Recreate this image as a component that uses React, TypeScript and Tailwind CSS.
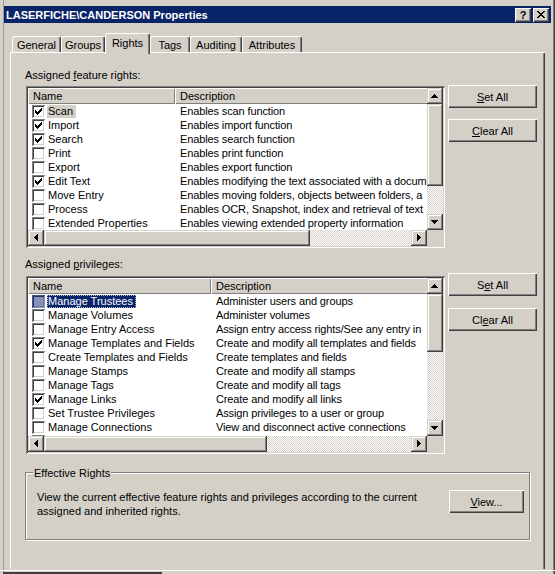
import React from "react";

const raised =
  "shadow-[inset_-1px_-1px_#404040,inset_1px_1px_#d4d0c8,inset_-2px_-2px_#808080,inset_2px_2px_#ffffff]";
const btn3d =
  "shadow-[inset_1px_1px_#ffffff,inset_-1px_-1px_#404040,inset_-2px_-2px_#808080]";
const sunken =
  "shadow-[inset_1px_1px_#808080,inset_-1px_-1px_#ffffff,inset_2px_2px_#404040,inset_-2px_-2px_#d4d0c8]";
const checker =
  "bg-[image:repeating-conic-gradient(#d4d0c8_0_25%,#ffffff_0_50%)] bg-[length:2px_2px]";

const arrows: Record<string, string> = {
  up: "M7 6h1v1h-1z M6 7h3v1h-3z M5 8h5v1h-5z M4 9h7v1h-7z",
  down: "M4 6h7v1h-7z M5 7h5v1h-5z M6 8h3v1h-3z M7 9h1v1h-1z",
  left: "M6 7h1v1h-1z M7 6h1v3h-1z M8 5h1v5h-1z M9 4h1v7h-1z",
  right: "M6 4h1v7h-1z M7 5h1v5h-1z M8 6h1v3h-1z M9 7h1v1h-1z",
};

function ScrollBtn({ dir }: { dir: "up" | "down" | "left" | "right" }) {
  return (
    <div className={`w-[16px] h-[16px] shrink-0 bg-[#d4d0c8] ${raised}`}>
      <svg width="16" height="16" viewBox="0 0 16 16" shapeRendering="crispEdges">
        <path d={arrows[dir]} fill="#000" />
      </svg>
    </div>
  );
}

const checkPath =
  "M9 3h1v1h-1z M8 4h2v1h-2z M3 5h1v1h-1z M7 5h3v1h-3z M3 6h2v1h-2z M6 6h3v1h-3z M3 7h5v1h-5z M4 8h3v1h-3z M5 9h1v1h-1z";

function Check({ checked, sel }: { checked: boolean; sel?: boolean }) {
  return (
    <span
      className={
        sel
          ? "block w-[13px] h-[13px] shrink-0 bg-[#8592b5] shadow-[inset_1px_1px_#45557f,inset_-1px_-1px_#8592b5,inset_2px_2px_#253468,inset_-2px_-2px_#6f7a99]"
          : `block w-[13px] h-[13px] shrink-0 bg-white ${sunken}`
      }
    >
      {checked && (
        <svg width="13" height="13" viewBox="0 0 13 13" shapeRendering="crispEdges">
          <path d={checkPath} fill="#000" />
        </svg>
      )}
    </span>
  );
}

type Item = { name: string; desc: string; checked: boolean; hl?: "gray" | "navy" };

const rights: Item[] = [
  { name: "Scan", desc: "Enables scan function", checked: true, hl: "gray" },
  { name: "Import", desc: "Enables import function", checked: true },
  { name: "Search", desc: "Enables search function", checked: true },
  { name: "Print", desc: "Enables print function", checked: false },
  { name: "Export", desc: "Enables export function", checked: false },
  { name: "Edit Text", desc: "Enables modifying the text associated with a docum", checked: true },
  { name: "Move Entry", desc: "Enables moving folders, objects between folders, a", checked: false },
  { name: "Process", desc: "Enables OCR, Snapshot, index and retrieval of text", checked: false },
  { name: "Extended Properties", desc: "Enables viewing extended property information", checked: false },
];

const privileges: Item[] = [
  { name: "Manage Trustees", desc: "Administer users and groups", checked: false, hl: "navy" },
  { name: "Manage Volumes", desc: "Administer volumes", checked: false },
  { name: "Manage Entry Access", desc: "Assign entry access rights/See any entry in", checked: false },
  { name: "Manage Templates and Fields", desc: "Create and modify all templates and fields", checked: true },
  { name: "Create Templates and Fields", desc: "Create templates and fields", checked: false },
  { name: "Manage Stamps", desc: "Create and modify all stamps", checked: false },
  { name: "Manage Tags", desc: "Create and modify all tags", checked: false },
  { name: "Manage Links", desc: "Create and modify all links", checked: true },
  { name: "Set Trustee Privileges", desc: "Assign privileges to a user or group", checked: false },
  { name: "Manage Connections", desc: "View and disconnect active connections", checked: false },
  { name: "", desc: "", checked: false },
];

function Row({ item, nameW }: { item: Item; nameW: string }) {
  const hlCls =
    item.hl === "gray"
      ? "bg-[#d4d0c8]"
      : item.hl === "navy"
      ? "bg-[#0a246a] text-white outline-1 outline-dotted outline-offset-[-1px] outline-[#b8bccc]"
      : "";
  return (
    <div className="h-[14px] flex items-center whitespace-nowrap shrink-0">
      <div className={`${nameW} shrink-0 h-full flex items-center pl-[4px]`}>
        <Check checked={item.checked} sel={item.hl === "navy"} />
        {item.name && (
          <span className={`ml-[2px] px-[1px] pr-[3px] h-[13px] leading-[13px] ${hlCls}`}>{item.name}</span>
        )}
      </div>
      {item.desc && <div className="pl-[5px] tracking-[-0.12px]">{item.desc}</div>}
    </div>
  );
}

function ListView({
  items,
  nameW,
  rowsH,
  outerH,
  vThumb,
  hThumb,
}: {
  items: Item[];
  nameW: string;
  rowsH: string;
  outerH: string;
  vThumb: string;
  hThumb: string;
}) {
  return (
    <div className={`ml-[1px] w-[419px] ${outerH} p-[2px] bg-white flex flex-col ${sunken}`}>
      <div className="flex flex-1 min-h-0">
        <div className="w-[399px] flex flex-col overflow-hidden">
          <div className="h-[16px] flex shrink-0">
            <div className={`${nameW} shrink-0 bg-[#d4d0c8] pl-[5px] leading-[16px] shadow-[inset_1px_1px_#ffffff,inset_-1px_-1px_#808080]`}>
              Name
            </div>
            <div className="flex-1 bg-[#d4d0c8] pl-[5px] leading-[16px] shadow-[inset_1px_1px_#ffffff,inset_0_-1px_#808080]">
              Description
            </div>
          </div>
          <div className={`${rowsH} flex flex-col overflow-hidden bg-white`}>
            {items.map((it, i) => (
              <Row key={i} item={it} nameW={nameW} />
            ))}
          </div>
        </div>
        <div className="w-[16px] flex flex-col">
          <ScrollBtn dir="up" />
          <div className={`${vThumb} shrink-0 bg-[#d4d0c8] ${raised}`} />
          <div className={`flex-1 ${checker}`} />
          <ScrollBtn dir="down" />
        </div>
      </div>
      <div className="h-[16px] flex shrink-0">
        <ScrollBtn dir="left" />
        <div className={`${hThumb} shrink-0 bg-[#d4d0c8] ${raised}`} />
        <div className={`flex-1 ${checker}`} />
        <ScrollBtn dir="right" />
        <div className="w-[16px] bg-[#d4d0c8]" />
      </div>
    </div>
  );
}

function PushButton({ children, w = "w-[89px]" }: { children: React.ReactNode; w?: string }) {
  return (
    <div className={`${w} h-[23px] bg-[#d4d0c8] flex items-center justify-center ${btn3d}`}>
      {children}
    </div>
  );
}

function Tab({ label, w, sel }: { label: string; w: string; sel?: boolean }) {
  if (sel) {
    return (
      <div
        className={`${w} h-[21px] -mb-[2px] relative z-10 bg-[#d4d0c8] flex items-center justify-center pb-[3px] border-t border-l border-t-white border-l-white border-r border-r-[#404040] rounded-t-[3px] shadow-[inset_-1px_0_#808080]`}
      >
        {label}
      </div>
    );
  }
  return (
    <div
      className={`${w} h-[16px] flex items-center justify-center border-t border-l border-t-white border-l-white border-r border-r-[#404040] rounded-t-[3px] shadow-[inset_-1px_0_#808080]`}
    >
      {label}
    </div>
  );
}

export default function App() {
  return (
    <div className="w-[555px] h-[574px] bg-[#d4d0c8] overflow-hidden flex flex-col font-['Liberation_Sans',Arial,sans-serif] text-[11px] leading-[14px] text-black shadow-[inset_-1px_0_#404040,inset_-2px_0_#808080,inset_3px_0_#d4d0c8,inset_4px_0_#9c9a94]">
      <div className="h-[6px] shrink-0" />
      {/* Title bar */}
      <div className="ml-[4px] w-[547px] h-[17px] shrink-0 bg-[#0a246a] flex items-center justify-between pl-[2px] pr-[2px]">
        <span className="text-white font-bold text-[11px]">{"LASERFICHE\\CANDERSON Properties"}</span>
        <div className="flex gap-[2px]">
          <div className={`w-[16px] h-[14px] bg-[#d4d0c8] flex items-center justify-center font-bold text-[11px] leading-[14px] ${btn3d}`}>
            ?
          </div>
          <div className={`w-[16px] h-[14px] bg-[#d4d0c8] ${btn3d}`}>
            <svg width="16" height="14" viewBox="0 0 16 14" shapeRendering="crispEdges">
              <path
                d="M4 3h2v1h-2z M10 3h2v1h-2z M5 4h2v1h-2z M9 4h2v1h-2z M6 5h4v1h-4z M7 6h2v1h-2z M6 7h4v1h-4z M5 8h2v1h-2z M9 8h2v1h-2z M4 9h2v1h-2z M10 9h2v1h-2z"
                fill="#000"
              />
            </svg>
          </div>
        </div>
      </div>
      {/* Tabs */}
      <div className="mt-[10px] ml-[12px] h-[19px] shrink-0 flex items-end">
        <Tab label="General" w="w-[49px]" />
        <Tab label="Groups" w="w-[44px]" />
        <Tab label="Rights" w="w-[45px]" sel />
        <Tab label="Tags" w="w-[40px]" />
        <Tab label="Auditing" w="w-[52px]" />
        <Tab label="Attributes" w="w-[60px]" />
      </div>
      {/* Panel */}
      <div className="ml-[10px] w-[535px] h-[517px] shrink-0 border-l border-t border-white shadow-[inset_-1px_0_#404040,inset_-2px_0_#808080] flex flex-col pt-[15px]">
        {/* Feature rights */}
        <div className="flex items-start">
          <div className="ml-[14px] w-[420px] flex flex-col">
            <div className="h-[14px]">
              Assigned <span className="underline">f</span>eature rights:
            </div>
            <div className="mt-[4px]">
              <ListView
                items={rights}
                nameW="w-[147px]"
                rowsH="h-[126px]"
                outerH="h-[162px]"
                vThumb="h-[82px]"
                hThumb="w-[266px]"
              />
            </div>
          </div>
          <div className="ml-[3px] mt-[17px] flex flex-col gap-[11px]">
            <PushButton>
              <span>
                <span className="underline">S</span>et All
              </span>
            </PushButton>
            <PushButton>
              <span>
                <span className="underline">C</span>lear All
              </span>
            </PushButton>
          </div>
        </div>
        {/* Privileges */}
        <div className="mt-[9px] flex items-start">
          <div className="ml-[14px] w-[420px] flex flex-col">
            <div className="h-[14px]">
              Assigned <span className="underline">p</span>rivileges:
            </div>
            <div className="mt-[5px]">
              <ListView
                items={privileges}
                nameW="w-[183px]"
                rowsH="h-[142px]"
                outerH="h-[178px]"
                vThumb="h-[58px]"
                hThumb="w-[223px]"
              />
            </div>
          </div>
          <div className="ml-[3px] mt-[16px] flex flex-col gap-[12px]">
            <PushButton>
              <span>
                S<span className="underline">e</span>t All
              </span>
            </PushButton>
            <PushButton>
              <span>
                Cl<span className="underline">e</span>ar All
              </span>
            </PushButton>
          </div>
        </div>
        {/* Effective Rights group */}
        <div className="mt-[18px] ml-[14px] w-[505px] h-[68px] relative border border-[#808080] shadow-[inset_1px_1px_#ffffff,1px_1px_#ffffff] flex items-start pt-[17px] pl-[11px] pr-[5px]">
          <span className="absolute -top-[7px] left-[7px] px-[1px] bg-[#d4d0c8] leading-[14px]">Effective Rights</span>
          <div className="flex-1 whitespace-nowrap">
            View the current effective feature rights and privileges according to the current
            <br />
            assigned and inherited rights.
          </div>
          <PushButton w="w-[75px]">
            <span>
              <span className="underline">V</span>iew...
            </span>
          </PushButton>
        </div>
      </div>
      <div className="mt-[1px] h-[1px] bg-white shrink-0" />
      <div className="mt-[1px] ml-[3px] w-[159px] h-[2px] bg-[#404040] shrink-0" />
    </div>
  );
}
